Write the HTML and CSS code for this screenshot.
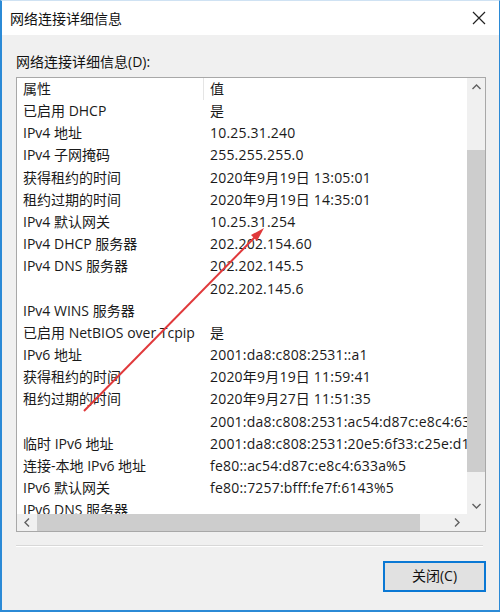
FILE: index.html
```html
<!DOCTYPE html>
<html>
	<head>
		<meta charset="utf-8">
		<title>网络连接详细信息</title>
		<link rel="stylesheet" href="styles.css">
	</head>
	<body>
		<div class="dialog">
			<div class="title-bar">
				<span class="title">网络连接详细信息</span>
				<svg class="close-x" width="14" height="14" viewBox="0 0 14 14">
					<path d="M1 1L13 13M13 1L1 13" stroke="#222" stroke-width="1.2" fill="none"/>
				</svg>
			</div>
			<div class="dialog-body">
				<div class="label">网络连接详细信息(D):</div>
				<div class="list-box">
					<div class="list-main">
						<div class="list-view">
							<div class="list-head">
								<div class="col-a">属性</div>
								<div class="col-b">值</div>
							</div>
							<div class="list-rows">
								<div class="row"><div class="col-a">已启用 DHCP</div><div class="col-b">是</div></div>
								<div class="row"><div class="col-a">IPv4 地址</div><div class="col-b">10.25.31.240</div></div>
								<div class="row"><div class="col-a">IPv4 子网掩码</div><div class="col-b">255.255.255.0</div></div>
								<div class="row"><div class="col-a">获得租约的时间</div><div class="col-b">2020年9月19日 13:05:01</div></div>
								<div class="row"><div class="col-a">租约过期的时间</div><div class="col-b">2020年9月19日 14:35:01</div></div>
								<div class="row"><div class="col-a">IPv4 默认网关</div><div class="col-b">10.25.31.254</div></div>
								<div class="row"><div class="col-a">IPv4 DHCP 服务器</div><div class="col-b">202.202.154.60</div></div>
								<div class="row"><div class="col-a">IPv4 DNS 服务器</div><div class="col-b">202.202.145.5</div></div>
								<div class="row"><div class="col-a"></div><div class="col-b">202.202.145.6</div></div>
								<div class="row"><div class="col-a">IPv4 WINS 服务器</div><div class="col-b"></div></div>
								<div class="row"><div class="col-a">已启用 NetBIOS over Tcpip</div><div class="col-b">是</div></div>
								<div class="row"><div class="col-a">IPv6 地址</div><div class="col-b">2001:da8:c808:2531::a1</div></div>
								<div class="row"><div class="col-a">获得租约的时间</div><div class="col-b">2020年9月19日 11:59:41</div></div>
								<div class="row"><div class="col-a">租约过期的时间</div><div class="col-b">2020年9月27日 11:51:35</div></div>
								<div class="row"><div class="col-a"></div><div class="col-b">2001:da8:c808:2531:ac54:d87c:e8c4:633a</div></div>
								<div class="row"><div class="col-a">临时 IPv6 地址</div><div class="col-b">2001:da8:c808:2531:20e5:6f33:c25e:d1f0</div></div>
								<div class="row"><div class="col-a">连接-本地 IPv6 地址</div><div class="col-b">fe80::ac54:d87c:e8c4:633a%5</div></div>
								<div class="row"><div class="col-a">IPv6 默认网关</div><div class="col-b">fe80::7257:bfff:fe7f:6143%5</div></div>
								<div class="row"><div class="col-a">IPv6 DNS 服务器</div><div class="col-b"></div></div>
							</div>
						</div>
						<div class="v-scroll">
							<div class="sb-btn">
								<svg width="9" height="6" viewBox="0 0 9 6"><path d="M0.5 5L4.5 1L8.5 5" stroke="#606060" stroke-width="1.4" fill="none"/></svg>
							</div>
							<div class="v-track">
								<div class="v-thumb"></div>
							</div>
							<div class="sb-btn">
								<svg width="9" height="6" viewBox="0 0 9 6"><path d="M0.5 1L4.5 5L8.5 1" stroke="#606060" stroke-width="1.4" fill="none"/></svg>
							</div>
						</div>
					</div>
					<div class="h-scroll">
						<div class="sb-btn">
							<svg width="6" height="9" viewBox="0 0 6 9"><path d="M5 0.5L1 4.5L5 8.5" stroke="#606060" stroke-width="1.4" fill="none"/></svg>
						</div>
						<div class="h-track">
							<div class="h-thumb"></div>
						</div>
						<div class="sb-btn">
							<svg width="6" height="9" viewBox="0 0 6 9"><path d="M1 0.5L5 4.5L1 8.5" stroke="#606060" stroke-width="1.4" fill="none"/></svg>
						</div>
						<div class="sb-corner"></div>
					</div>
				</div>
				<div class="divider"></div>
				<div class="actions">
					<div class="btn">关闭(C)</div>
				</div>
			</div>
			<!-- 红色标注箭头 -->
			<svg class="mark-arrow" width="500" height="612" viewBox="0 0 500 612">
				<line x1="84" y1="411" x2="258" y2="234" stroke="#e0393b" stroke-width="2"/>
				<path d="M264 228L251 235L257 241Z" fill="#e0393b"/>
			</svg>
		</div>
	</body>
</html>
```

FILE: styles.css
```css
* {
	margin: 0;
	padding: 0;
	box-sizing: border-box;
}

body {
	width: 500px;
	height: 612px;
	font-family: "Open Sans", "Noto Sans CJK SC", sans-serif;
	font-size: 14px;
	color: #1a1a1a;
}

.dialog {
	position: relative;
	width: 500px;
	height: 612px;
	border: 1px solid #2b8ad6;
	border-top: 1px solid #cfe2f3;
	border-left-width: 2px;
	border-bottom-width: 2px;
	background: #f0f0f0;
	display: flex;
	flex-direction: column;
}

.title-bar {
	height: 34px;
	background: #fff;
	display: flex;
	align-items: center;
	justify-content: space-between;
	padding: 0 13px 0 8px;
}

.title-bar .title {
	font-size: 14px;
	font-family: "Noto Sans CJK SC", sans-serif;
	color: #111;
}

.dialog-body {
	flex: 1;
	padding: 16px 13px 0 14px;
	display: flex;
	flex-direction: column;
}

.label {
	height: 26px;
	line-height: 22px;
	color: #111;
}

.list-box {
	width: 470px;
	height: 455px;
	border: 1px solid #a8a8a8;
	background: #fff;
	display: flex;
	flex-direction: column;
}

.list-main {
	flex: 1;
	display: flex;
	overflow: hidden;
}

.list-view {
	flex: 1;
	overflow: hidden;
	white-space: nowrap;
}

.list-head,
.row {
	display: flex;
	height: 22.2px;
	line-height: 22px;
}

.list-head {
	height: 22px;
}

.col-a {
	width: 187px;
	flex: none;
	padding-left: 6px;
}

.col-b {
	padding-left: 6px;
	flex: none;
	letter-spacing: 0.2px;
}

.list-head .col-a {
	border-right: 1px solid #e5e5e5;
}

.v-scroll {
	width: 18px;
	background: #f0f0f0;
	display: flex;
	flex-direction: column;
}

.sb-btn {
	width: 18px;
	height: 17px;
	flex: none;
	display: flex;
	align-items: center;
	justify-content: center;
}

.v-track {
	flex: 1;
	padding-top: 55px;
	padding-bottom: 25px;
	display: flex;
}

.v-thumb {
	flex: 1;
	background: #cdcdcd;
}

.h-scroll {
	height: 17px;
	background: #f0f0f0;
	display: flex;
}

.h-scroll .sb-btn {
	width: 20px;
	height: 17px;
}

.h-track {
	flex: 1;
	padding-right: 27px;
	display: flex;
}

.h-thumb {
	flex: 1;
	background: #cdcdcd;
}

.sb-corner {
	width: 18px;
	background: #f0f0f0;
}

.divider {
	margin-top: 13px;
	width: 467px;
	height: 2px;
	border-top: 1px solid #d8d8d8;
	border-bottom: 1px solid #fff;
}

.actions {
	display: flex;
	justify-content: flex-end;
	padding-top: 14px;
}

.btn {
	width: 103px;
	height: 31px;
	border: 2px solid #0a78d4;
	background: #e1e1e1;
	text-align: center;
	line-height: 26px;
	color: #111;
}

.mark-arrow {
	position: absolute;
	left: -2px;
	top: -1px;
	pointer-events: none;
}
```
